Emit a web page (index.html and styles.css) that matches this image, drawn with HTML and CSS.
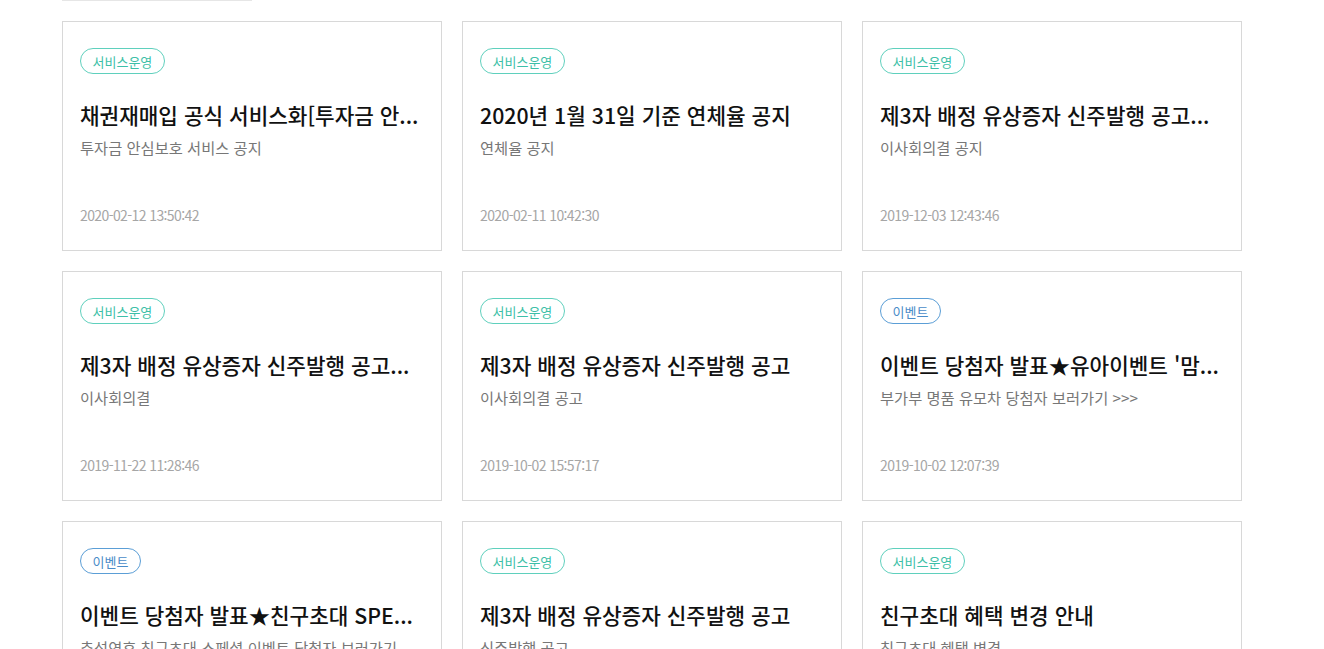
FILE: index.html
```html
<!DOCTYPE html>
<html lang="ko">
<head>
<meta charset="utf-8">
<link rel="stylesheet" href="styles.css">
</head>
<body>
<div class="page">
  <div class="topline"></div>
  <div class="grid">
    <div class="card">
      <span class="tag tag-service">서비스운영</span>
      <div class="title">채권재매입 공식 서비스화[투자금 안...</div>
      <div class="sub">투자금 안심보호 서비스 공지</div>
      <div class="date">2020-02-12 13:50:42</div>
    </div>
    <div class="card">
      <span class="tag tag-service">서비스운영</span>
      <div class="title">2020년 1월 31일 기준 연체율 공지</div>
      <div class="sub">연체율 공지</div>
      <div class="date">2020-02-11 10:42:30</div>
    </div>
    <div class="card">
      <span class="tag tag-service">서비스운영</span>
      <div class="title">제3자 배정 유상증자 신주발행 공고...</div>
      <div class="sub">이사회의결 공지</div>
      <div class="date">2019-12-03 12:43:46</div>
    </div>
    <div class="card">
      <span class="tag tag-service">서비스운영</span>
      <div class="title">제3자 배정 유상증자 신주발행 공고...</div>
      <div class="sub">이사회의결</div>
      <div class="date">2019-11-22 11:28:46</div>
    </div>
    <div class="card">
      <span class="tag tag-service">서비스운영</span>
      <div class="title">제3자 배정 유상증자 신주발행 공고</div>
      <div class="sub">이사회의결 공고</div>
      <div class="date">2019-10-02 15:57:17</div>
    </div>
    <div class="card">
      <span class="tag tag-event">이벤트</span>
      <div class="title">이벤트 당첨자 발표★유아이벤트 '맘...</div>
      <div class="sub">부가부 명품 유모차 당첨자 보러가기 &gt;&gt;&gt;</div>
      <div class="date">2019-10-02 12:07:39</div>
    </div>
    <div class="card">
      <span class="tag tag-event">이벤트</span>
      <div class="title">이벤트 당첨자 발표★친구초대 SPE...</div>
      <div class="sub">추석연휴 친구초대 스페셜 이벤트 당첨자 보러가기</div>
      <div class="date">2019-09-30 10:00:00</div>
    </div>
    <div class="card">
      <span class="tag tag-service">서비스운영</span>
      <div class="title">제3자 배정 유상증자 신주발행 공고</div>
      <div class="sub">신주발행 공고</div>
      <div class="date">2019-09-20 10:00:00</div>
    </div>
    <div class="card">
      <span class="tag tag-service">서비스운영</span>
      <div class="title">친구초대 혜택 변경 안내</div>
      <div class="sub">친구초대 혜택 변경</div>
      <div class="date">2019-09-10 10:00:00</div>
    </div>
  </div>
</div>
</body>
</html>
```

FILE: styles.css
```css
* { box-sizing: border-box; }
html, body { margin: 0; padding: 0; background: #fff; }
body {
  font-family: "Noto Sans CJK KR", "Noto Sans", sans-serif;
  color: #111;
}
.page { padding-left: 62px; }
.topline { width: 190px; height: 1px; background: #e6e6e6; }
.grid {
  display: grid;
  grid-template-columns: repeat(3, 380px);
  gap: 20px;
  margin-top: 20px;
}
.card {
  height: 230px;
  border: 1px solid #d8d8d8;
  padding: 26px 17px 25px;
  display: flex;
  flex-direction: column;
  align-items: flex-start;
}
.tag {
  display: inline-flex;
  align-items: center;
  height: 26px;
  padding: 0 11.5px;
  border-radius: 13px;
  font-size: 13px;
  border: 1px solid;
  line-height: 1;
}
.tag-service { border-color: #5fd0bd; color: #3dbfa8; }
.tag-event { border-color: #5b9ed6; color: #4a8cc8; }
.title {
  margin-top: 27px;
  width: 100%;
  font-size: 21.3px;
  line-height: 28px;
  font-weight: 500;
  color: #111;
  white-space: nowrap;
  overflow: hidden;
}
.sub {
  margin-top: 7px;
  font-size: 15.3px;
  line-height: 22px;
  color: #777;
  white-space: nowrap;
  overflow: hidden;
  width: 100%;
}
.date {
  margin-top: auto;
  font-size: 14px;
  line-height: 20px;
  color: #a6a6a6;
  letter-spacing: -0.6px;
}
```
